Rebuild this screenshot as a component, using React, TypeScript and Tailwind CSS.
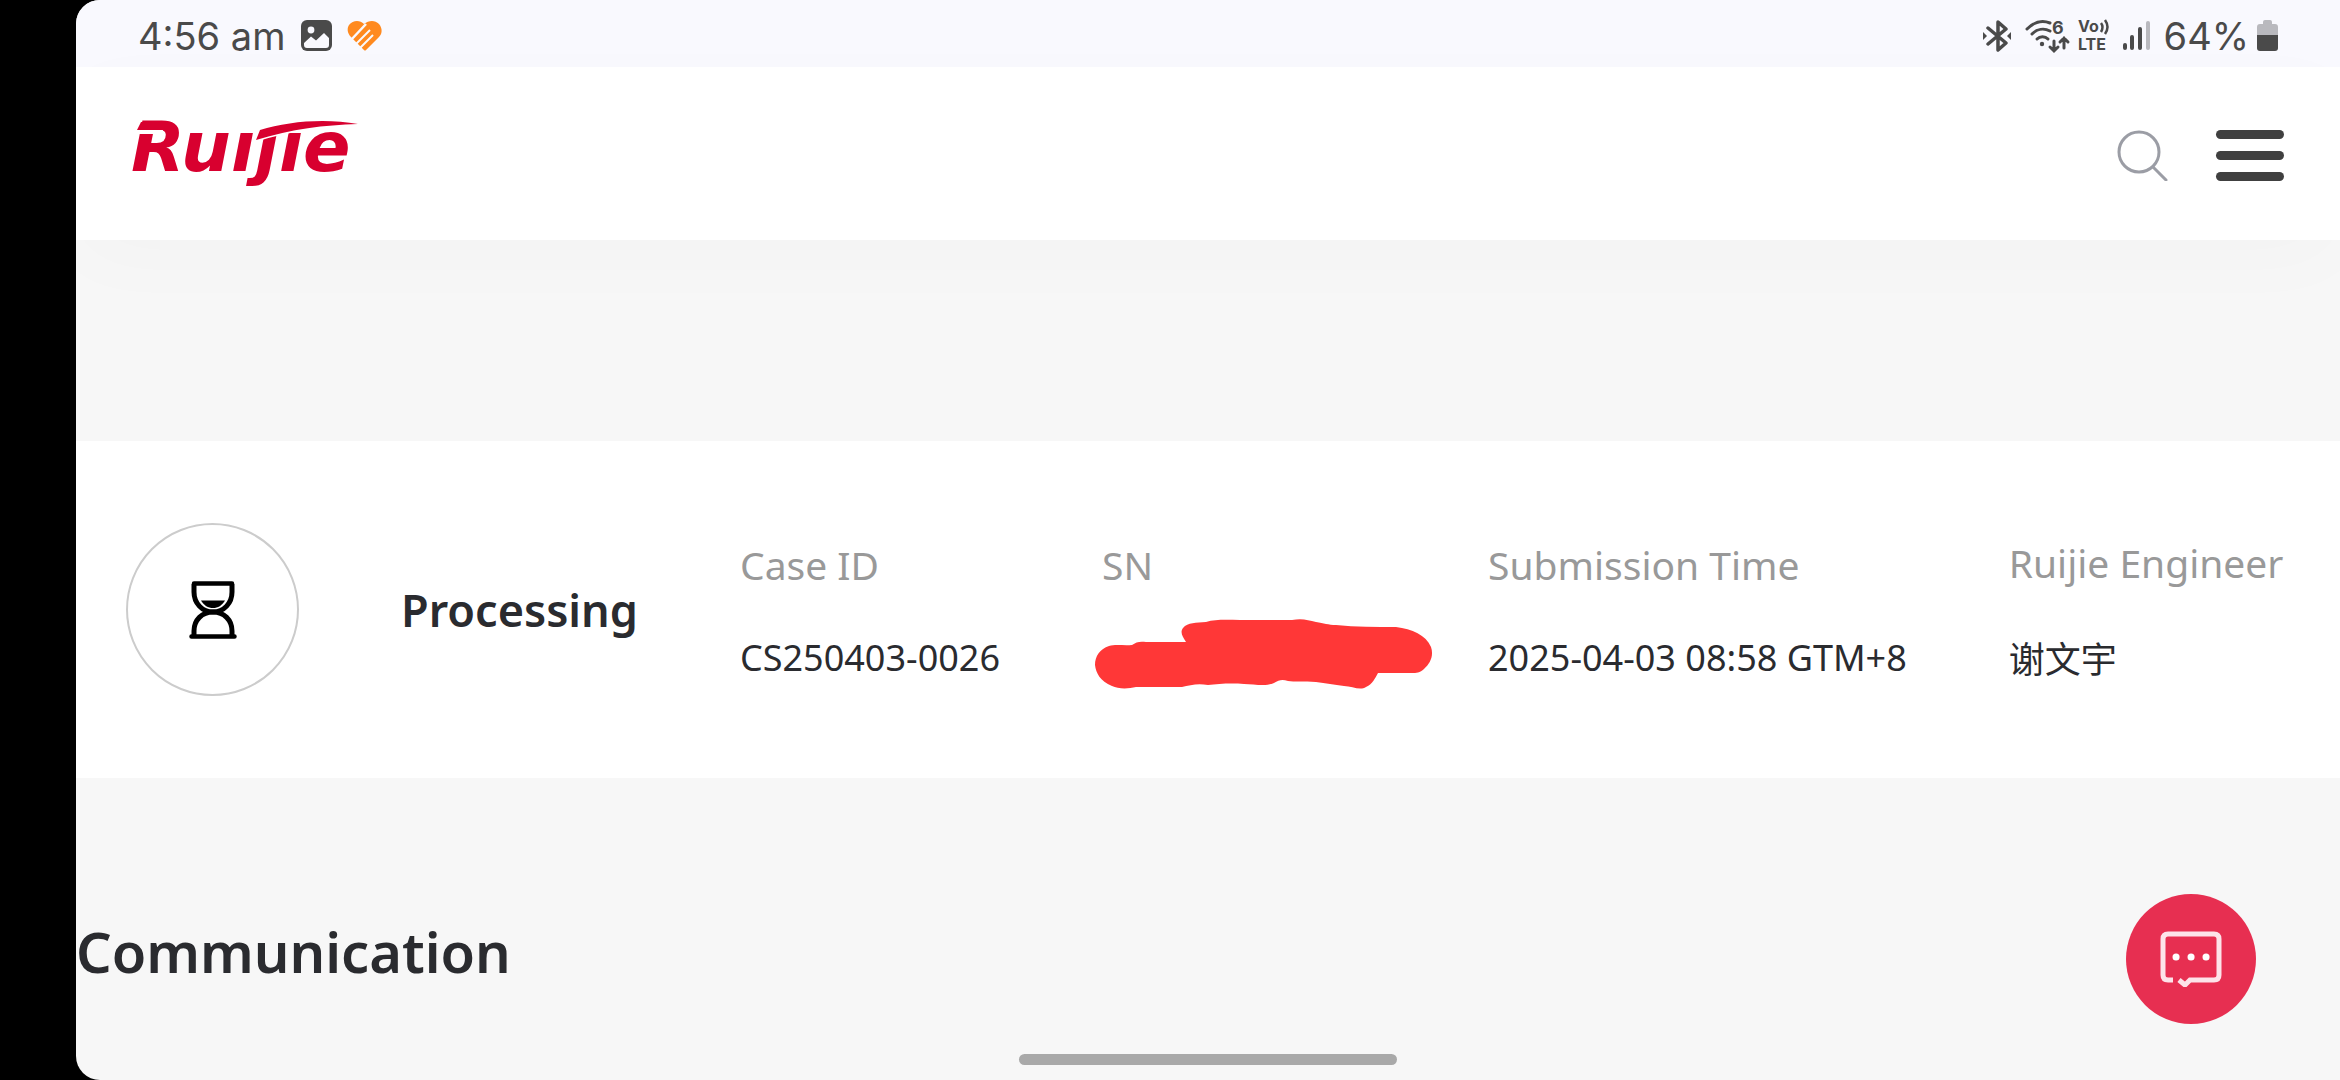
import type { ReactNode } from "react";

interface CaseField {
  label: string;
  value: ReactNode;
}

const fields: CaseField[] = [
  { label: "Case ID", value: "CS250403-0026" },
  { label: "SN", value: <RedactedValue /> },
  { label: "Submission Time", value: "2025-04-03 08:58 GTM+8" },
  { label: "Ruijie Engineer", value: "谢文宇" },
];

function RedactedValue() {
  return (
    <span className="relative block h-[49px] w-[284px]">
      <svg
        className="absolute -top-3.5 -left-2 h-[72px] w-[342px]"
        viewBox="0 0 342 72"
        fill="#ff3737"
        role="img"
        aria-label="Hidden serial number"
      >
        <path d="M15 27 C22 25 30 27 38 26 C42 23 46 22 52 23 L92 23 C88 17 86 13 89 9 C94 3 102 4 112 3 C122 0 134 1 146 1 L198 1 C208 -1 214 1 222 3 C230 4 234 6 242 6 C262 8 282 8 302 8 C318 10 332 16 337 28 C340 37 336 45 330 50 C326 54 322 54 318 54 L284 54 C281 59 279 65 272 68 C266 72 258 67 250 67 C240 66 232 64 222 63 C210 62 200 63 194 62 C188 60 185 61 180 64 C172 68 160 65 150 65 C136 64 124 65 114 66 C104 64 96 66 88 68 L42 68 C34 70 24 70 18 67 C6 62 2 54 1 46 C1 37 6 30 15 27Z" />
      </svg>
    </span>
  );
}

function RuijieLogo() {
  return (
    <svg className="h-[72px] w-[230px] overflow-visible" viewBox="0 0 230 72" fill="#d8002f" role="img" aria-label="Ruijie">
      <text x="-1" y="51" className="font-['DejaVu_Sans'] text-[70px] font-bold italic">
        Ruıȷıe
      </text>
      <path fill="#ffffff" d="M2 10 H31 L30 14 H1Z" />
      <path d="M9 2 H34 L32 10 H5Z" />
      <path
        d="M128 10 C156 1 194 -2 226 4 C192 5 160 9 124 20Z"
        stroke="#ffffff"
        strokeWidth="3"
        paintOrder="stroke"
      />
    </svg>
  );
}

function StatusBar() {
  return (
    <div className="flex h-[67px] items-center justify-between bg-[#f9f9fe] px-[62px] pt-1 font-['Inter',sans-serif] text-[38px] leading-none text-[#4a4a4a]">
      <div className="flex items-center">
        <span className="mr-4">4:56 am</span>
        <svg className="mr-3.5 size-8" viewBox="0 0 32 32">
          <rect width="31" height="31" rx="6" fill="#4a4a4a" />
          <circle cx="10" cy="10" r="3.4" fill="#f9f9fe" />
          <path d="M3 23 L10 16.500 L15 20.500 L23 13 L28 18 V25 Q28 28 25 28 H6 Q3 28 3 25Z" fill="#f9f9fe" />
        </svg>
        <svg className="h-8 w-9" viewBox="0 0 36 32" fill="none">
          <path
            d="M17 30 L4 17 C0 13 0 8 2 5 C6 0 13 0 17 4 C22 0 28 0 32 4 C36 9 35 14 32 17 L19 30 Q18 31 17 30Z"
            fill="#ff8a1f"
          />
          <path d="M4 20 L19 4" stroke="#f9f9fe" strokeWidth="2.500" />
          <path d="M8 25 L23 10" stroke="#f9f9fe" strokeWidth="2" />
          <path d="M13 28 L26 15" stroke="#f9f9fe" strokeWidth="2" />
        </svg>
      </div>
      <div className="flex items-center">
        <svg className="mr-3.5 h-8 w-7" viewBox="0 0 28 32" fill="none" stroke="#4a4a4a" strokeWidth="3.500" strokeLinejoin="round" strokeLinecap="round">
          <path d="M5 8 L23 23 L15 30 V2 L23 9 L5 24" />
          <path d="M0 12 L4 16 L0 20Z M28 12 L24 16 L28 20Z" fill="#4a4a4a" stroke="none" />
        </svg>
        <svg className="mr-2 h-8 w-[45px] overflow-visible" viewBox="0 0 45 32" fill="none" stroke="#4a4a4a" strokeWidth="3" strokeLinecap="round">
          <path d="M2 9 C9 2 17 0 25 3" />
          <path d="M7 14 C12 9 19 8 25 11" />
          <path d="M12 19 C15 16 20 16 23 19" />
          <circle cx="17" cy="24" r="2.200" fill="#4a4a4a" stroke="none" />
          <path d="M29 21 V30 M25 27 L29 31 L33 27 M39 28 V18 M35 22 L39 18 L43 22" />
          <text x="27" y="14" fill="#4a4a4a" stroke="none" className="text-[18px] font-bold">6</text>
        </svg>
        <svg className="mr-3 h-8 w-8 overflow-visible" viewBox="0 0 32 32" fill="#4a4a4a">
          <text x="0" y="12" className="text-[16px] font-bold">Vo</text>
          <text x="0" y="30" className="text-[16px] font-bold">LTE</text>
          <path d="M23 3 q3 4 0 9 M27 0 q5 7 0 14" fill="none" stroke="#4a4a4a" strokeWidth="2.500" />
        </svg>
        <svg className="mr-3.5 h-8 w-7" viewBox="0 0 28 32" strokeWidth="4" strokeLinecap="round" stroke="#4a4a4a">
          <path d="M3 25 V28 M10 17 V28 M18 9 V28" />
          <path d="M26 3 V28" stroke="#b9b9be" />
        </svg>
        <span className="mr-2">64%</span>
        <svg className="h-8 w-[21px]" viewBox="0 0 21 32">
          <path d="M6 4 V2 Q6 0 8 0 H13 Q15 0 15 2 V4 H18 Q21 4 21 7 V16 H0 V7 Q0 4 3 4Z" fill="#b9b9be" />
          <path d="M0 15 H21 V28 Q21 31 18 31 H3 Q0 31 0 28Z" fill="#4a4a4a" />
        </svg>
      </div>
    </div>
  );
}

function Header() {
  return (
    <header className="relative flex h-[173px] items-center justify-between bg-white pt-1 pr-14 pl-14 shadow-[0_20px_80px_rgba(0,0,0,0.02)]">
      <a href="#">
        <RuijieLogo />
      </a>
      <div className="flex items-center gap-12">
        <button type="button" aria-label="Search">
          <svg className="size-[51px]" viewBox="0 0 51 51" fill="none" stroke="#9b9da5" strokeWidth="3" strokeLinecap="round">
            <circle cx="22" cy="22" r="20" />
            <path d="M36 37 L49 50" />
          </svg>
        </button>
        <button type="button" aria-label="Menu" className="flex w-[68px] flex-col gap-3">
          <span className="h-[9px] w-full rounded-full bg-[#404040]" />
          <span className="h-[9px] w-full rounded-full bg-[#404040]" />
          <span className="h-[9px] w-full rounded-full bg-[#404040]" />
        </button>
      </div>
    </header>
  );
}

function HourglassIcon() {
  return (
    <svg className="h-[58px] w-12" viewBox="0 0 48 58" fill="none" stroke="#000000" strokeWidth="5">
      <path d="M5 2.500 H43 M2.500 55.500 H45.500" strokeLinecap="round" strokeWidth="4.500" />
      <path d="M5 3 V11 C5 22 13 31 24 31 C35 31 43 22 43 11 V3" />
      <path d="M5 55 V50 C5 39 13 31 24 31 C35 31 43 39 43 50 V55" />
      <path d="M12 19.500 H36 C33 24.500 29 27 24 27 C19 27 15 24.500 12 19.500Z" fill="#000000" stroke="none" />
    </svg>
  );
}

export default function App() {
  return (
    <div className="min-h-screen bg-black pl-[76px] font-['Noto_Sans','Noto_Sans_CJK_SC',sans-serif] text-[#2a2b2f]">
      <div className="min-h-screen overflow-hidden rounded-l-3xl bg-[#f7f7f7]">
        <StatusBar />
        <Header />
        <main className="pt-[201px]">
          <section className="flex items-center gap-[102px] bg-white px-[50px] py-[82px] whitespace-nowrap">
            <div className="flex size-[173px] shrink-0 items-center justify-center rounded-full border-2 border-[#cccccc]">
              <HourglassIcon />
            </div>
            <h3 className="text-[45px] leading-[normal] font-semibold">Processing</h3>
            {fields.map((field) => (
              <dl key={field.label} className="shrink-0">
                <dt className="text-[39px] leading-[normal] text-[#999999]">{field.label}</dt>
                <dd className="mt-[42px] text-[36px] leading-[normal]">{field.value}</dd>
              </dl>
            ))}
          </section>
          <h2 className="pt-[135px] text-[56px] leading-[normal] font-semibold">Communication</h2>
        </main>
      </div>

      <button
        type="button"
        aria-label="Open chat"
        className="fixed right-[84px] bottom-14 flex size-[130px] items-center justify-center rounded-full bg-[#e72f51]"
      >
        <svg className="h-[56px] w-[62px]" viewBox="0 0 62 56" fill="none" stroke="#fde3e9" strokeWidth="5">
          <path d="M13 49 H8 Q3 49 3 44 V8 Q3 3 8 3 H54 Q59 3 59 8 V44 Q59 49 54 49 H30 L25 54 L19 49" />
          <path d="M16 26 h0.100 M31 26 h0.100 M46 26 h0.100" stroke="#ffffff" strokeWidth="7" strokeLinecap="round" />
        </svg>
      </button>

      {/* Gesture bar */}
      <div className="pointer-events-none fixed right-0 bottom-[15px] left-[76px] flex justify-center">
        <div className="h-[11px] w-[378px] rounded-full bg-[#a9a9a9]" />
      </div>
    </div>
  );
}
